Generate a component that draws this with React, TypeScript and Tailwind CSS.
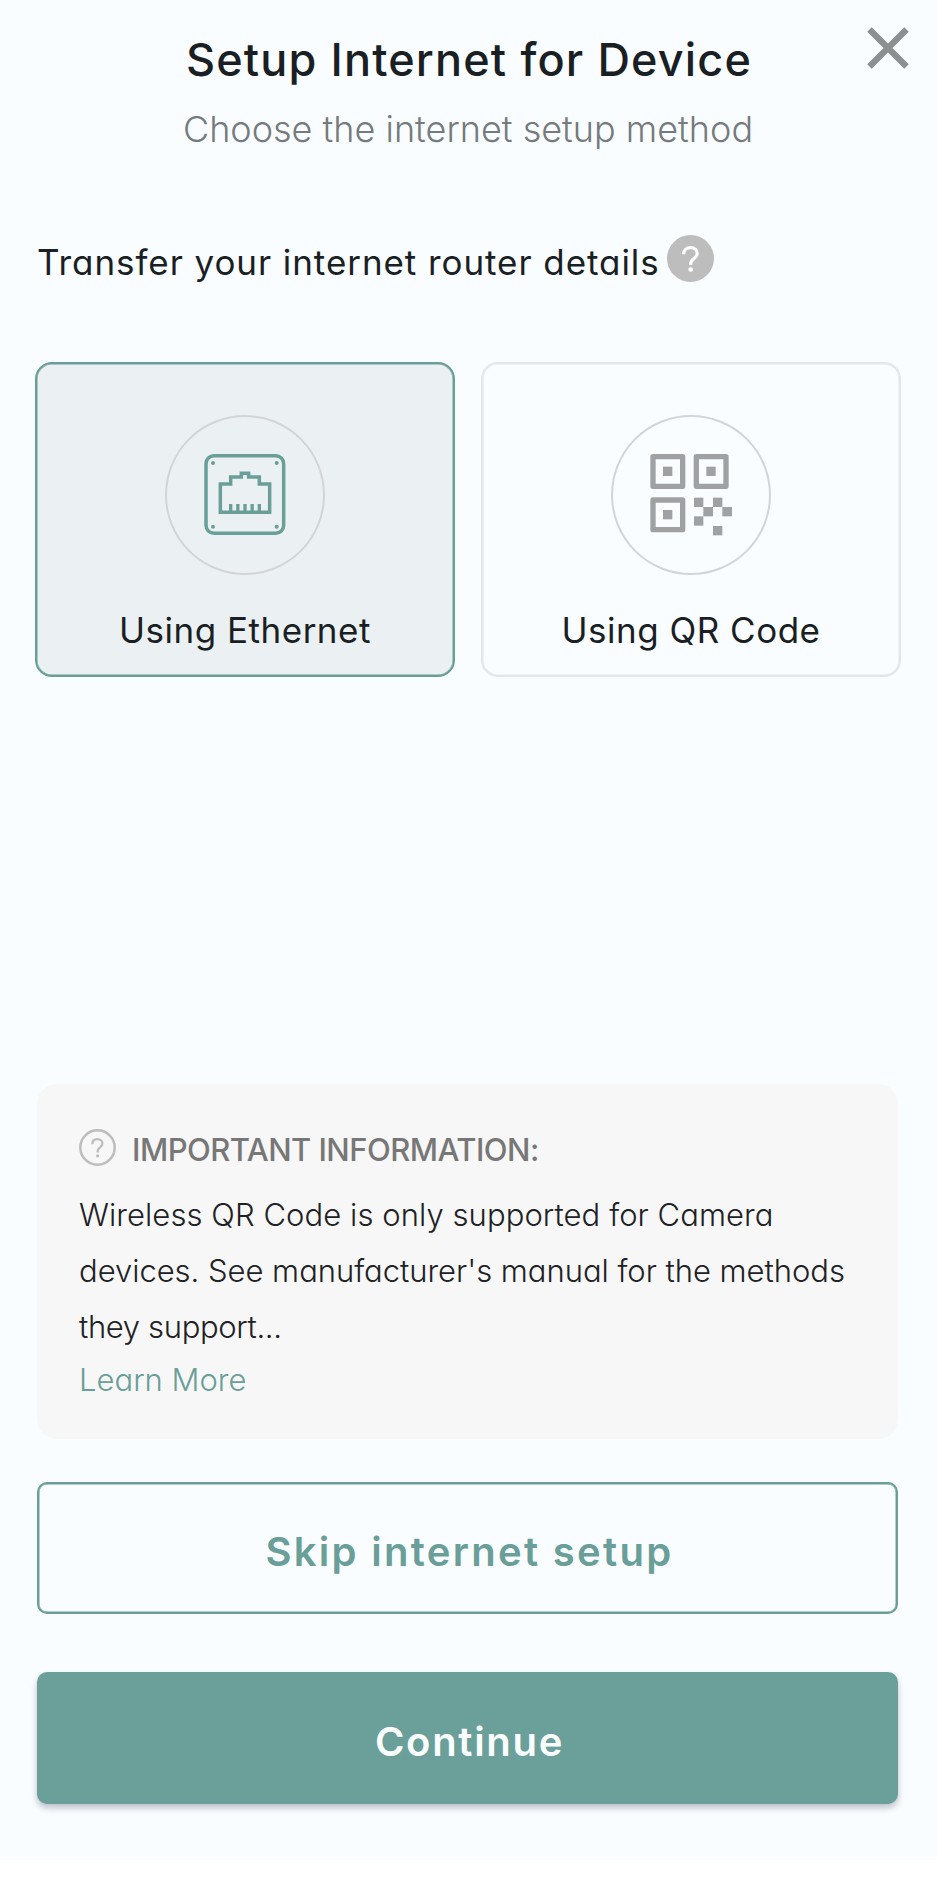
import type { ReactNode } from "react";

function CloseIcon() {
  return (
    <svg className="h-[42px] w-[42px]" viewBox="0 0 42 42" fill="none" stroke="#8b8f90" strokeWidth="6.4">
      <path d="M2.500 2.500L39.500 39.500M39.500 2.500L2.500 39.500" />
    </svg>
  );
}

function HelpFilledIcon() {
  return (
    <svg className="h-[47px] w-[47px]" viewBox="0 0 47 47" fill="none">
      <circle cx="23.5" cy="23.5" r="23.5" fill="#bdbdbd" />
      <path
        d="M16.6 19.3C16.6 15 19.6 12.6 23.5 12.6C27.4 12.6 30.2 15 30.2 18.5C30.2 23.3 23.7 23.6 23.7 28.6V30"
        stroke="#fff"
        strokeWidth="3.2"
      />
      <circle cx="23.7" cy="34.6" r="2.3" fill="#fff" />
    </svg>
  );
}

function HelpOutlineIcon() {
  return (
    <svg className="h-[37px] w-[37px]" viewBox="0 0 37 37" fill="none" stroke="#bdbdbd">
      <circle cx="18.5" cy="18.5" r="17.2" strokeWidth="2.5" />
      <path
        d="M13.3 15.2C13.3 12 15.5 10.2 18.4 10.2C21.3 10.2 23.4 12 23.4 14.6C23.4 18.2 18.6 18.5 18.6 22.3V23.4"
        strokeWidth="2.3"
      />
      <circle cx="18.6" cy="26.8" r="1.6" fill="#bdbdbd" stroke="none" />
    </svg>
  );
}

function EthernetIcon() {
  return (
    <svg className="h-[110px] w-[110px]" viewBox="0 0 330 330" fill="none" stroke="#6a9e98">
      <rect x="48" y="47" width="233" height="233" rx="24" strokeWidth="10.5" />
      <path
        d="M91 132H122V111H154V100H176V111H208V132H239V217H91Z"
        strokeWidth="10.5"
      />
      <path d="M122 192V214M143.500 192V214M165 192V214M186.500 192V214M208 192V214" strokeWidth="10" />
      <g fill="#6a9e98" stroke="none">
        <circle cx="69" cy="69" r="6" />
        <circle cx="260" cy="69" r="6" />
        <circle cx="69" cy="260" r="6" />
        <circle cx="260" cy="260" r="6" />
      </g>
    </svg>
  );
}

function QrIcon() {
  return (
    <svg className="h-[110px] w-[110px]" viewBox="3 0 330 330" fill="#a0a1a2">
      <g fill="none" stroke="#a0a1a2" strokeWidth="16" strokeLinejoin="round">
        <rect x="54" y="50" width="89" height="89" />
        <rect x="184" y="50" width="89" height="89" />
        <rect x="54" y="180" width="89" height="89" />
      </g>
      <rect x="84" y="80" width="28" height="28" />
      <rect x="214" y="80" width="28" height="28" />
      <rect x="84" y="210" width="28" height="28" />
      <rect x="177" y="173" width="28" height="28" />
      <rect x="234" y="173" width="28" height="28" />
      <rect x="205" y="201" width="29" height="28" />
      <rect x="262" y="201" width="29" height="28" />
      <rect x="177" y="229" width="28" height="28" />
      <rect x="234" y="258" width="28" height="28" />
    </svg>
  );
}

function MethodCard({ label, icon, selected = false }: { label: string; icon: ReactNode; selected?: boolean }) {
  return (
    <button
      className={
        selected
          ? "flex h-[315px] w-[420px] flex-col items-center rounded-[17px] border-2 border-[#6a9e98] bg-[#ebf1f3] pt-[51px] inset-ring-[0.5px] inset-ring-[#6a9e98]"
          : "flex h-[315px] w-[420px] flex-col items-center rounded-[17px] border-2 border-[#e4e7ea] pt-[51px] inset-ring-[0.5px] inset-ring-[#e4e7ea]"
      }
    >
      <span className="flex h-40 w-40 shrink-0 items-center justify-center rounded-full border-2 border-[#d3d4d9]">
        {icon}
      </span>
      <span className="mt-[31px] text-[35px] leading-[48px] tracking-[0.5px] text-[#1a1f24]">{label}</span>
    </button>
  );
}

export default function App() {
  return (
    <div className="min-h-[1895px] w-[937px] bg-white font-['Inter',sans-serif] [font-feature-settings:'cv11']">
      <main className="relative flex h-[1860px] flex-col bg-[#f9fdff] pt-[30px] pr-[36px] pl-[35px]">
        <button className="absolute top-[27px] right-[28px]" aria-label="Close">
          <CloseIcon />
        </button>

        <header className="flex flex-col items-center whitespace-nowrap">
          <h1 className="pl-[2px] text-[45px] leading-[60px] font-medium tracking-[1.15px] text-[#1a1f24]">
            Setup Internet for Device
          </h1>
          <p className="mt-[15px] text-[36px] leading-[48px] font-light text-[#757a7c]">
            Choose the internet setup method
          </p>
        </header>

        <div className="mt-[82px] flex items-start whitespace-nowrap">
          <h2 className="mt-[3px] w-[632px] pl-[2px] text-[35px] leading-[48px] tracking-[0.93px] text-[#1a1f24]">
            Transfer your internet router details
          </h2>
          <HelpFilledIcon />
        </div>

        <div className="mt-[76px] flex justify-between whitespace-nowrap">
          <MethodCard label="Using Ethernet" icon={<EthernetIcon />} selected />
          <MethodCard label="Using QR Code" icon={<QrIcon />} />
        </div>

        <section className="mt-auto mr-[3px] ml-[2px] h-[355px] shrink-0 rounded-[20px] bg-[#f7f7f7] pt-[45px] pl-[42px] whitespace-nowrap">
          <div className="flex items-start">
            <HelpOutlineIcon />
            <h3 className="mt-px ml-[16px] text-[31px] leading-[40px] font-medium tracking-[-0.55px] text-[#777777]">
              IMPORTANT INFORMATION:
            </h3>
          </div>
          <p className="mt-[17px] text-[31px] leading-[56px] font-light text-[#202124]">
            <span className="block tracking-[0.07px]">Wireless QR Code is only supported for Camera</span>
            <span className="block tracking-[-0.03px]">devices. See manufacturer's manual for the methods</span>
            <span className="block tracking-[-0.35px]">they support...</span>
          </p>
          <a className="mt-[3px] block text-[31px] leading-[44px] font-light text-[#6a9e98]">Learn More</a>
        </section>

        <div className="mt-[43px] mr-[3px] mb-[56px] ml-[2px] flex flex-col gap-[58px]">
          <button className="h-[132px] rounded-[10px] border-2 border-[#6a9e98] pt-[7px] pl-[4px] text-[40px] font-semibold tracking-[2.3px] text-[#6a9e98] inset-ring-[0.5px] inset-ring-[#6a9e98]">
            Skip internet setup
          </button>
          <button className="h-[132px] rounded-[10px] bg-[#6a9f9a] pt-[7px] pl-[4px] text-[40px] font-semibold tracking-[1.7px] text-[#fafeff] shadow-[0_4px_6px_rgba(40,40,70,0.28)]">
            Continue
          </button>
        </div>
      </main>
    </div>
  );
}
